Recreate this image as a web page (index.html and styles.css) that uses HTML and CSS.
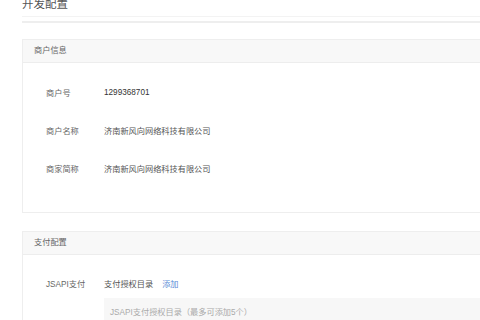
FILE: index.html
```html
<!DOCTYPE html>
<html lang="zh-CN">
<head>
<meta charset="utf-8">
<title>开发配置</title>
<link rel="stylesheet" href="styles.css">
</head>
<body>
<div class="page">
  <div class="page-head">
    <h1 class="page-title">开发配置</h1>
  </div>
  <div class="page-rule"></div>

  <section class="card card-merchant">
    <div class="card-head">商户信息</div>
    <div class="card-body">
      <div class="row"><span class="label">商户号</span><span class="value num">1299368701</span></div>
      <div class="row"><span class="label">商户名称</span><span class="value">济南新风向网络科技有限公司</span></div>
      <div class="row"><span class="label">商家简称</span><span class="value">济南新风向网络科技有限公司</span></div>
    </div>
  </section>

  <section class="card card-pay">
    <div class="card-head">支付配置</div>
    <div class="card-body">
      <div class="row row-pay"><span class="label">JSAPI支付</span><span class="value">支付授权目录</span><a class="link">添加</a></div>
      <div class="row-box">
        <div class="box">JSAPI支付授权目录（最多可添加5个）</div>
      </div>
    </div>
  </section>
</div>
</body>
</html>
```

FILE: styles.css
```css
html, body {
  margin: 0;
  padding: 0;
  background: #ffffff;
  overflow: hidden;
}
body {
  font-family: "Liberation Sans", "Noto Sans CJK SC", sans-serif;
  font-size: 8.2px;
  color: #333;
  width: 480px;
  height: 320px;
}
.page {
  padding-left: 22px;
  width: 600px;
}
.page-head {
  margin-top: -5px;
  height: 22px;
  border-bottom: 1px solid #f3f3f3;
  box-sizing: border-box;
}
.page-title {
  margin: 0;
  font-size: 11.5px;
  font-weight: normal;
  line-height: 18px;
  color: #555;
}
.page-rule {
  margin-top: 4px;
  height: 2px;
  background: #eeeeee;
}
.card {
  border: 1px solid #eeeeee;
  background: #fff;
}
.card-merchant {
  margin-top: 16px;
  height: 174px;
  box-sizing: border-box;
}
.card-pay {
  margin-top: 18px;
}
.card-head {
  height: 22px;
  line-height: 22px;
  background: #f8f8f8;
  border-bottom: 1px solid #ededed;
  padding-left: 11px;
  color: #666;
}
.card-merchant .card-body {
  padding-top: 10px;
}
.card-pay .card-body {
  padding-top: 13px;
}
.row {
  display: flex;
  align-items: center;
  height: 38px;
  padding-left: 23px;
}
.row-pay {
  height: 30px;
}
.label {
  width: 58px;
  color: #666;
}
.value {
  color: #555;
}
.num {
  color: #333;
}
.link {
  margin-left: 9px;
  color: #5b8bd6;
}
.row-box {
  padding-left: 81px;
}
.box {
  height: 30px;
  line-height: 30px;
  background: #f7f7f7;
  padding-left: 6px;
  color: #aaa;
}
```
